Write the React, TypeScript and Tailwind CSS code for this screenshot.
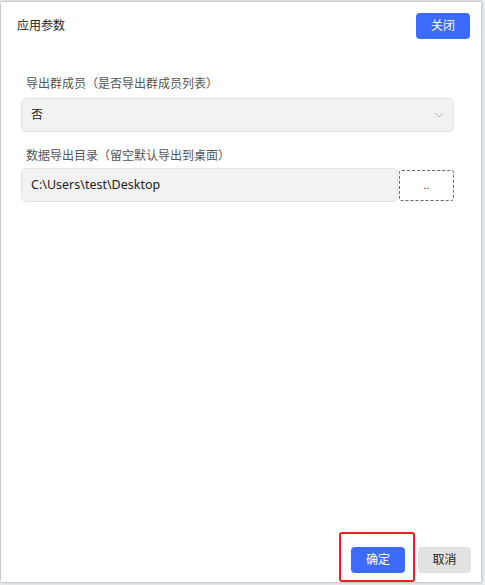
import React from "react";

const font = { fontFamily: '"Noto Sans", "Noto Sans CJK SC", sans-serif' };

export default function App() {
  return (
    <div className="w-[485px] h-[585px] bg-[#e9ecef] pl-px pt-[2px] overflow-hidden" style={font}>
      <div className="w-[480px] h-[580px] bg-white shadow-[0_0_3px_rgba(0,0,0,0.35)] flex flex-col">
        <div className="flex items-center justify-between pl-[16px] pr-[11px] pt-[11px]">
          <span className="text-[12px] text-[#222]">应用参数</span>
          <button className="w-[54px] h-[26px] rounded-[4px] bg-[#3c6bfd] text-white text-[12px] flex items-center justify-center">关闭</button>
        </div>
        <div className="px-[20px] pt-[36px] flex flex-col">
          <div className="pl-[5px] text-[12px] text-[#555] leading-[18px]">导出群成员（是否导出群成员列表）</div>
          <div className="mt-[5px] h-[34px] w-[433px] rounded-[5px] border border-[#e2e2e2] bg-[#f2f2f2] flex items-center justify-between pl-[9px] pr-[9px]">
            <span className="text-[12px] text-[#222]">否</span>
            <svg width="10" height="6" viewBox="0 0 10 6" fill="none"><path d="M1 1l4 4 4-4" stroke="#b5b5b5" strokeWidth="1" /></svg>
          </div>
          <div className="mt-[15px] pl-[5px] text-[12px] text-[#555] leading-[18px]">数据导出目录（留空默认导出到桌面）</div>
          <div className="mt-[3px] flex items-center gap-[1px]">
            <div className="h-[34px] w-[377px] rounded-[5px] border border-[#e2e2e2] bg-[#f2f2f2] flex items-center pl-[9px]">
              <span className="text-[12.5px] text-[#222]">C:\Users\test\Desktop</span>
            </div>
            <button className="h-[31px] w-[55px] rounded-[3px] border border-dashed border-[#666] bg-white text-[11px] text-[#444] flex items-center justify-center">..</button>
          </div>
        </div>
        <div className="flex-1" />
        <div className="flex justify-end gap-[13px] pr-[10px] pb-[9px]">
          <div className="relative">
            <button className="w-[54px] h-[26px] rounded-[4px] bg-[#3c6bfd] text-white text-[12px] flex items-center justify-center">确定</button>
            <div className="absolute left-[-12px] top-[-15px] w-[76px] h-[50px] border-2 border-[#f21d1d] rounded-[3px]" />
          </div>
          <button className="w-[53px] h-[26px] rounded-[4px] bg-[#e2e2e2] text-[#222] text-[12px] flex items-center justify-center">取消</button>
        </div>
      </div>
    </div>
  );
}
